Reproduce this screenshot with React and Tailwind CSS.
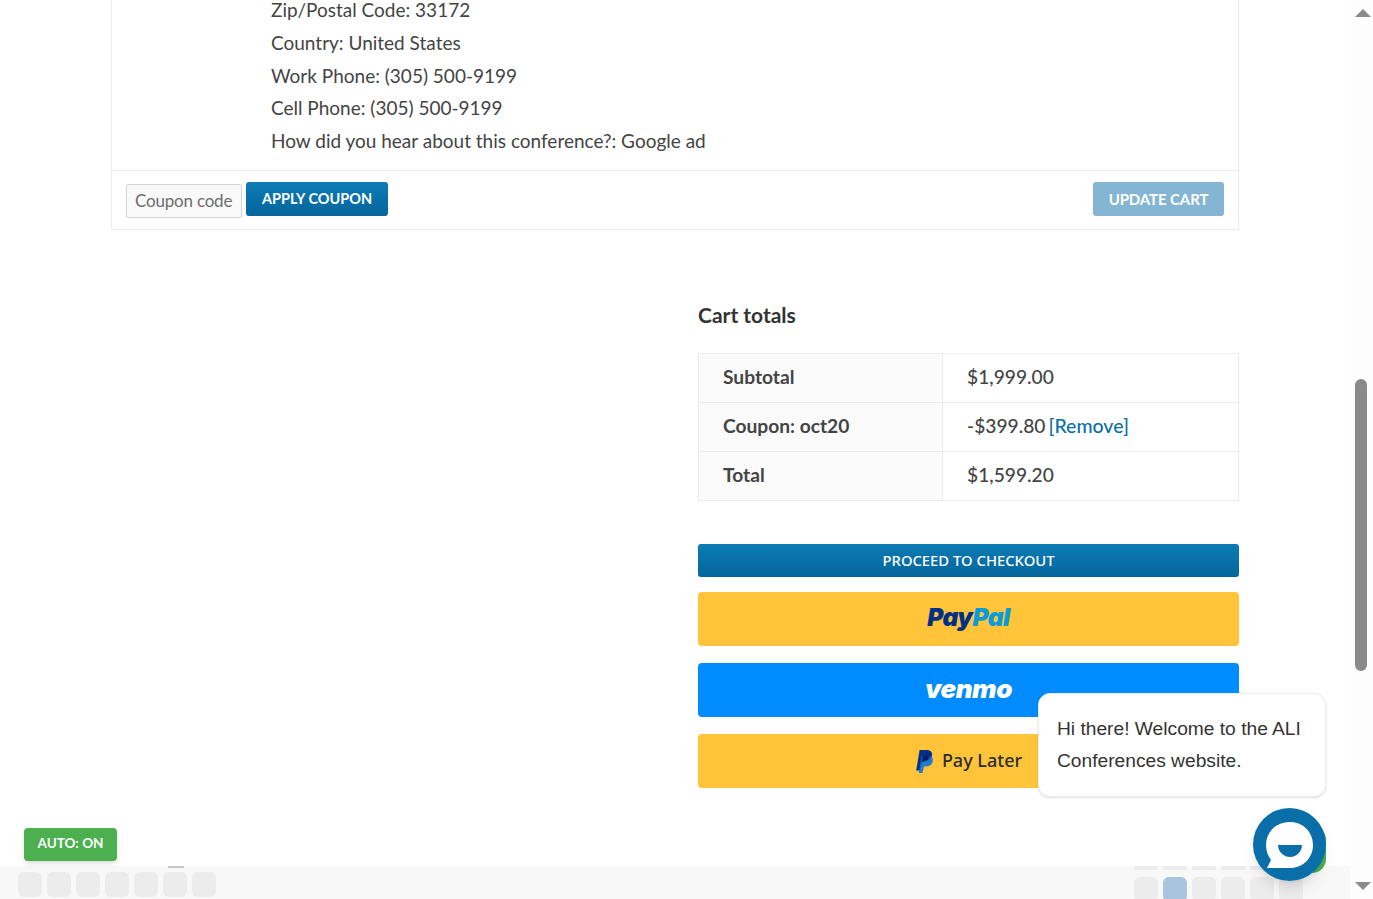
import React from "react";

const addressLines = [
  "Zip/Postal Code: 33172",
  "Country: United States",
  "Work Phone: (305) 500-9199",
  "Cell Phone: (305) 500-9199",
  "How did you hear about this conference?: Google ad",
];

const totals = [
  { label: "Subtotal", value: "$1,999.00" },
  { label: "Coupon: oct20", value: "-$399.80", remove: true },
  { label: "Total", value: "$1,599.20" },
];

function PayPalMark() {
  return (
    <svg width="20" height="24" viewBox="0 0 20 24">
      <path d="M5 21.5H1.2L4.6 1h7.2c3.6 0 5.8 2 5.2 5.400-.7 4-3.600 6-7.400 6H7l-2 9.100z" fill="#003087" />
      <path d="M7.500 24H3.800L6.600 7h6.200c3.400 0 5.600 1.500 5 5-.6 3.800-3.400 5.500-7 5.500H8.900L7.500 24z" fill="#0070e0" opacity="0.85" />
      <path d="M6 17.500l1.700-10.500h4.800c.8 0 1.500.1 2.200.3-.9 3.400-3.500 5.100-7 5.100H7l-1 5.100z" fill="#001c64" />
    </svg>
  );
}

function ChatIcon() {
  return (
    <svg width="73" height="73" viewBox="0 0 73 73">
      <circle cx="36.500" cy="36.500" r="36.500" fill="#0a6fa8" />
      <path d="M37 14c13 0 23 10 23 23S50 60 37 60H14l4-8c-3-4-5-9-5-15 0-13 10-23 24-23z" fill="#fff" />
      <path d="M25 37h24c0 6-5 12-12 12s-12-6-12-12z" fill="#0a6fa8" />
    </svg>
  );
}

function DockSquares({ count, active }) {
  const squares = [];
  for (let i = 0; i < count; i++) {
    squares.push(
      <div
        key={i}
        className={
          i === active
            ? "h-[25px] w-[24px] rounded-[6px] bg-[#a9c4de]"
            : "h-[25px] w-[24px] rounded-[6px] bg-[#ececec]"
        }
      />
    );
  }
  return squares;
}

export default function App() {
  return (
    <div className="relative flex h-[899px] overflow-hidden bg-white font-['Lato',sans-serif] text-[#444]">
      <main className="w-[1350px] shrink-0 pl-[111px] pr-[111px]">
        {/* cart table, scrolled past the top */}
        <div className="-mt-[6px] border border-t-0 border-[#ebebeb]">
          <div className="pb-[12px] pl-[159px] pt-0 text-[19px] leading-[32.750px]">
            {addressLines.map((line) => (
              <p key={line}>{line}</p>
            ))}
          </div>
          <div className="flex h-[59px] items-center justify-between border-t border-[#ebebeb] pb-[2px] pl-[14px] pr-[14px]">
            <div className="flex items-center gap-[4px]">
              <div className="mt-[4px] flex h-[34px] w-[116px] items-center rounded-[2px] border border-[#d4d4d4] bg-[#f9f9f9] pl-[8px] text-[17px] tracking-[-0.2px] text-[#6d6d6d]">
                Coupon code
              </div>
              <button className="h-[34px] w-[142px] rounded-[3px] bg-gradient-to-b from-[#0c7cb5] to-[#05659b] text-[14.500px] font-bold text-white">
                APPLY COUPON
              </button>
            </div>
            <button className="h-[34px] w-[131px] rounded-[3px] bg-[#84b6d3] text-[15px] font-bold tracking-[-0.1px] text-white">
              UPDATE CART
            </button>
          </div>
        </div>

        {/* totals column */}
        <div className="ml-auto mt-[72px] w-[541px]">
          <h2 className="text-[21px] font-bold leading-[26px] text-[#333]">Cart totals</h2>
          <table className="mt-[25px] w-full border-collapse text-[19.200px]">
            <tbody>
              {totals.map((row) => (
                <tr key={row.label} className="h-[49px]">
                  <th className="w-[244px] border border-[#ebebeb] bg-[#fbfbfb] pb-[1px] pl-[24px] text-left font-bold">
                    {row.label}
                  </th>
                  <td className="border border-[#ebebeb] pb-[1px] pl-[24px] font-medium">
                    {row.value}
                    {row.remove && <a className="ml-[3px] text-[19.500px] text-[#0a6fa8]">[Remove]</a>}
                  </td>
                </tr>
              ))}
            </tbody>
          </table>
          <button className="mt-[43px] block h-[33px] w-full rounded-[3px] bg-gradient-to-b from-[#0c7cb5] to-[#05659b] pb-[1px] font-['Noto_Sans',sans-serif] text-[14.800px] font-medium text-white">
            PROCEED TO CHECKOUT
          </button>
          <div className="mt-[15px] flex h-[54px] items-center justify-center rounded-[4px] bg-[#ffc439] pb-[2px] font-['Inter',sans-serif] text-[24.500px] font-black italic tracking-[-0.5px]">
            <span className="text-[#003087]">Pay</span>
            <span className="text-[#0a9bd8]">Pal</span>
          </div>
          <div className="mt-[17px] flex h-[54px] items-center justify-center rounded-[4px] bg-[#008cff] pb-[2px] font-['Inter',sans-serif] text-[26px] font-black italic tracking-[-0.5px] text-white">
            venmo
          </div>
          <div className="mt-[17px] flex h-[54px] items-center justify-center gap-[7px] rounded-[4px] bg-[#ffc439] font-['Noto_Sans',sans-serif] text-[18px] font-medium text-[#2c2e2f]">
            <PayPalMark />
            Pay Later
          </div>
        </div>
      </main>

      {/* page scrollbar */}
      <div className="flex h-full w-[23px] flex-col items-center justify-between bg-[#fdfdfd] py-[9px]">
        <div className="ml-[3px] h-0 w-0 border-x-[8px] border-b-[8px] border-x-transparent border-b-[#8a8a8a]" />
        <div className="ml-[3px] h-0 w-0 border-x-[8px] border-t-[8px] border-x-transparent border-t-[#8a8a8a]" />
      </div>
      <div className="absolute left-[1355px] top-[379px] h-[292px] w-[12px] rounded-[6px] bg-[#8a8a8a]" />

      {/* bottom dock */}
      <div className="absolute bottom-0 left-0 h-[33px] w-[1350px] bg-[#f8f8f8]">
        <div className="absolute left-[168px] top-0 h-[2px] w-[16px] bg-[#c8c8c8]" />
        <div className="absolute left-[1134px] top-0 flex gap-[5px]">
          {[0, 1, 2, 3, 4, 5].map((i) => (
            <div key={i} className="h-[4px] w-[24px] rounded-b-[3px] bg-[#ececec]" />
          ))}
        </div>
        <div className="absolute left-[18px] top-[6px] flex gap-[5px]">
          <DockSquares count={7} />
        </div>
        <div className="absolute left-[1134px] top-[11px] flex gap-[5px]">
          <DockSquares count={6} active={1} />
        </div>
      </div>

      <button className="absolute left-[24px] top-[828px] h-[33px] w-[93px] rounded-[4px] bg-[#4caf50] pb-[2px] text-[13.500px] font-bold text-white shadow-md">
        AUTO: ON
      </button>

      {/* chat widget */}
      <div className="absolute left-[1038px] top-[693px] h-[104px] w-[288px] rounded-[12px] border border-[#eeeeee] bg-white px-[18px] pt-[19px] font-['Liberation_Sans',sans-serif] text-[19.200px] leading-[32px] text-[#333] shadow-sm">
        Hi there! Welcome to the ALI Conferences website.
      </div>
      <div className="absolute left-[1300px] top-[826px] h-[47px] w-[26px] rounded-r-[14px] bg-[#4caf50]" />
      <div className="absolute left-[1253px] top-[808px] rounded-full shadow-lg">
        <ChatIcon />
      </div>
    </div>
  );
}
